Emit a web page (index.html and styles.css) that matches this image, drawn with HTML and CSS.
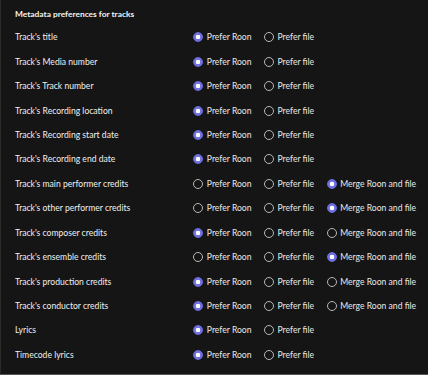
FILE: index.html
```html
<!DOCTYPE html>
<html lang="en">
<head>
    <meta charset="UTF-8">
    <meta name="viewport" content="width=device-width, initial-scale=1.0">
    <title>Metadata preferences</title>
    <link rel="stylesheet" href="styles.css">
</head>
<body>
    <div class="panel">
        <h2>Metadata preferences for tracks</h2>
        <div class="rows">
            <div class="row">
                <span class="label">Track's title</span>
                <span class="opt"><i class="radio on"></i>Prefer Roon</span>
                <span class="opt"><i class="radio"></i>Prefer file</span>
            </div>
            <div class="row">
                <span class="label">Track's Media number</span>
                <span class="opt"><i class="radio on"></i>Prefer Roon</span>
                <span class="opt"><i class="radio"></i>Prefer file</span>
            </div>
            <div class="row">
                <span class="label">Track's Track number</span>
                <span class="opt"><i class="radio on"></i>Prefer Roon</span>
                <span class="opt"><i class="radio"></i>Prefer file</span>
            </div>
            <div class="row">
                <span class="label">Track's Recording location</span>
                <span class="opt"><i class="radio on"></i>Prefer Roon</span>
                <span class="opt"><i class="radio"></i>Prefer file</span>
            </div>
            <div class="row">
                <span class="label">Track's Recording start date</span>
                <span class="opt"><i class="radio on"></i>Prefer Roon</span>
                <span class="opt"><i class="radio"></i>Prefer file</span>
            </div>
            <div class="row">
                <span class="label">Track's Recording end date</span>
                <span class="opt"><i class="radio on"></i>Prefer Roon</span>
                <span class="opt"><i class="radio"></i>Prefer file</span>
            </div>
            <div class="row">
                <span class="label">Track's main performer credits</span>
                <span class="opt"><i class="radio"></i>Prefer Roon</span>
                <span class="opt"><i class="radio"></i>Prefer file</span>
                <span class="opt"><i class="radio on"></i>Merge Roon and file</span>
            </div>
            <div class="row">
                <span class="label">Track's other performer credits</span>
                <span class="opt"><i class="radio"></i>Prefer Roon</span>
                <span class="opt"><i class="radio"></i>Prefer file</span>
                <span class="opt"><i class="radio on"></i>Merge Roon and file</span>
            </div>
            <div class="row">
                <span class="label">Track's composer credits</span>
                <span class="opt"><i class="radio on"></i>Prefer Roon</span>
                <span class="opt"><i class="radio"></i>Prefer file</span>
                <span class="opt"><i class="radio"></i>Merge Roon and file</span>
            </div>
            <div class="row">
                <span class="label">Track's ensemble credits</span>
                <span class="opt"><i class="radio"></i>Prefer Roon</span>
                <span class="opt"><i class="radio"></i>Prefer file</span>
                <span class="opt"><i class="radio on"></i>Merge Roon and file</span>
            </div>
            <div class="row">
                <span class="label">Track's production credits</span>
                <span class="opt"><i class="radio on"></i>Prefer Roon</span>
                <span class="opt"><i class="radio"></i>Prefer file</span>
                <span class="opt"><i class="radio"></i>Merge Roon and file</span>
            </div>
            <div class="row">
                <span class="label">Track's conductor credits</span>
                <span class="opt"><i class="radio on"></i>Prefer Roon</span>
                <span class="opt"><i class="radio"></i>Prefer file</span>
                <span class="opt"><i class="radio"></i>Merge Roon and file</span>
            </div>
            <div class="row">
                <span class="label">Lyrics</span>
                <span class="opt"><i class="radio on"></i>Prefer Roon</span>
                <span class="opt"><i class="radio"></i>Prefer file</span>
            </div>
            <div class="row">
                <span class="label">Timecode lyrics</span>
                <span class="opt"><i class="radio on"></i>Prefer Roon</span>
                <span class="opt"><i class="radio"></i>Prefer file</span>
            </div>
        </div>
    </div>
</body>
</html>
```

FILE: styles.css
```css
html, body {
    margin: 0;
    padding: 0;
    background-color: #151515;
}

body {
    font-family: Lato, "Liberation Sans", sans-serif;
    color: #f0f0f0;
    font-size: 8.6px;
}

.panel {
    width: 428px;
    height: 375px;
    box-sizing: border-box;
    border-left: 1px solid #2a2a2a;
    border-bottom: 1px solid #555;
    padding: 8px 0 0 14px;
}

h2 {
    margin: 0;
    font-size: 8.4px;
    font-weight: bold;
    line-height: 12px;
    color: #f4f4f4;
}

.rows {
    padding-top: 5px;
}

.row {
    display: grid;
    grid-template-columns: 178.3px 70.7px 62.7px auto;
    align-items: center;
    height: 24.45px;
}

.label {
    color: #f0f0f0;
}

.opt {
    display: flex;
    align-items: center;
    gap: 3.5px;
    color: #e8e8e8;
    white-space: nowrap;
}

.radio {
    display: inline-block;
    width: 8px;
    height: 8px;
    border: 1.2px solid #b8b8b8;
    border-radius: 50%;
    box-sizing: content-box;
}

.radio.on {
    border-color: #6e6ee0;
    background: radial-gradient(circle, #ffffff 0 2px, #6e6ee0 2.6px);
}
```
